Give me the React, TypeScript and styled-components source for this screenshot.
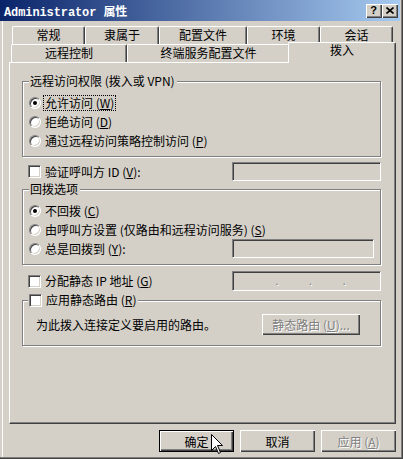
import React from 'react';
import styled, { createGlobalStyle, css } from 'styled-components';

const FACE = '#D4D0C8';
const SHADOW = '#808080';
const DARK = '#404040';

const Global = createGlobalStyle`
  html, body { margin: 0; padding: 0; background: ${FACE}; }
  body { font-family: "Noto Sans CJK SC", sans-serif; font-size: 12px; }
`;

const Window = styled.div`
  position: relative;
  width: 403px;
  height: 459px;
  box-sizing: border-box;
  background: ${FACE};
  border-right: 1px solid ${DARK};
  border-bottom: 1px solid ${DARK};
  box-shadow: inset -1px -1px 0 ${SHADOW}, inset 2px 0 0 ${FACE}, inset 3px 0 0 #fff;
  padding: 0 2px 0 0;
  display: flex;
  flex-direction: column;
  overflow: hidden;
  font-family: "Noto Sans CJK SC", sans-serif;
  font-size: 12px;
  color: #000;
`;

const TitleBar = styled.div`
  height: 21px;
  flex: none;
  display: flex;
  align-items: center;
  padding: 0 2px 0 4px;
  background: linear-gradient(to right, #0a246a, #a6caf0);
`;

const Title = styled.span`
  flex: 1;
  font-family: "Liberation Mono", "Noto Sans CJK SC", monospace;
  font-weight: bold;
  font-size: 12px;
  color: #fff;
  white-space: pre;
  letter-spacing: -0.1px;
`;

const CaptionButton = styled.div`
  width: 16px;
  height: 14px;
  box-sizing: border-box;
  background: ${FACE};
  box-shadow: inset 1px 1px 0 #fff, inset -1px -1px 0 ${DARK}, inset -2px -2px 0 ${SHADOW};
  display: flex;
  align-items: center;
  justify-content: center;
  font-family: "Liberation Sans", sans-serif;
  font-weight: bold;
  font-size: 11px;
  line-height: 1;
  color: #000;
  padding: 0 1px 1px 0;
`;

const Body = styled.div`
  flex: 1;
  display: flex;
  flex-direction: column;
  padding: 5px 4px 0 9px;
`;

const TabRow = styled.div<{ $indent: number }>`
  height: 18px;
  display: flex;
  align-items: flex-start;
  padding-left: ${p => p.$indent}px;
`;

const Tab = styled.div<{ $w: number; $active?: boolean }>`
  width: ${p => p.$w}px;
  height: 18px;
  box-sizing: border-box;
  flex: none;
  display: flex;
  align-items: center;
  justify-content: center;
  background: ${FACE};
  border-top: 1px solid #fff;
  border-left: 1px solid #fff;
  border-right: 1px solid ${DARK};
  border-top-left-radius: 2px;
  border-top-right-radius: 2px;
  box-shadow: inset -1px 0 0 ${SHADOW};
  padding-bottom: 2px;
  line-height: 14px;
  white-space: nowrap;
  ${p =>
    p.$active &&
    css`
      position: relative;
      z-index: 1;
      width: ${p.$w + 4}px;
      height: 21px;
      margin: -2px -2px 0;
      padding: 0 0 6px;
    `}
`;

const Panel = styled.div`
  height: 362px;
  box-sizing: border-box;
  border-top: 1px solid #fff;
  border-left: 1px solid #fff;
  border-right: 1px solid ${DARK};
  border-bottom: 1px solid ${DARK};
  box-shadow: inset -1px -1px 0 ${SHADOW};
  padding: 11px 14px 0 12px;
  display: flex;
  flex-direction: column;
`;

const Group = styled.fieldset<{ $pt: number; $pb: number; $mt?: number }>`
  margin: ${p => p.$mt ?? 0}px 0 0;
  min-width: 0;
  border: 1px solid ${SHADOW};
  box-shadow: inset 1px 1px 0 #fff, 1px 1px 0 #fff;
  padding: ${p => `${p.$pt}px 6px ${p.$pb}px 6px`};
`;

const Legend = styled.legend<{ $ml?: number }>`
  height: 14px;
  line-height: 14px;
  padding: 0 2px 0 1px;
  margin-left: ${p => p.$ml ?? 0}px;
  background: ${FACE};
  display: flex;
  align-items: center;
  gap: 4px;
  white-space: pre;
`;

const OptionRow = styled.div<{ $h?: number; $mt?: number; $pl?: number }>`
  height: ${p => p.$h ?? 19}px;
  margin-top: ${p => p.$mt ?? 0}px;
  padding-left: ${p => p.$pl ?? 0}px;
  display: flex;
  align-items: center;
  gap: 4px;
  white-space: pre;
`;

const Radio = styled.span<{ $checked?: boolean }>`
  width: 12px;
  height: 12px;
  box-sizing: border-box;
  flex: none;
  border-radius: 50%;
  border: 1px solid;
  border-color: ${SHADOW} #fff #fff ${SHADOW};
  box-shadow: inset 1px 1px 0 ${DARK}, inset -1px -1px 0 ${FACE};
  background: #fff;
  display: flex;
  align-items: center;
  justify-content: center;
  &::after {
    content: '';
    width: 4px;
    height: 4px;
    border-radius: 50%;
    background: ${p => (p.$checked ? '#000' : 'transparent')};
  }
`;

const Check = styled.span`
  width: 13px;
  height: 13px;
  box-sizing: border-box;
  flex: none;
  border: 1px solid;
  border-color: ${SHADOW} #fff #fff ${SHADOW};
  box-shadow: inset 1px 1px 0 ${DARK}, inset -1px -1px 0 ${FACE};
  background: #fff;
`;

const Label = styled.span<{ $focus?: boolean }>`
  line-height: 14px;
  ${p =>
    p.$focus &&
    css`
      outline: 1px dotted #000;
      outline-offset: 0;
      padding: 0 1px;
      margin-left: -1px;
    `}
`;

const Edit = styled.div<{ $w: number; $h?: number }>`
  width: ${p => p.$w}px;
  height: ${p => p.$h ?? 19}px;
  box-sizing: border-box;
  flex: none;
  margin-left: auto;
  border: 1px solid;
  border-color: ${SHADOW} #fff #fff ${SHADOW};
  box-shadow: inset 1px 1px 0 ${DARK}, inset -1px -1px 0 ${FACE};
  background: ${FACE};
  display: flex;
  align-items: center;
  justify-content: space-evenly;
  padding: 0 4px 0 12px;
`;

const Dot = styled.span`
  color: ${SHADOW};
  text-shadow: 1px 1px 0 #fff;
  line-height: 12px;
  font-family: "Liberation Sans", sans-serif;
  font-size: 12px;
`;

const PushButton = styled.button<{ $w: number; $h: number; $default?: boolean; $disabled?: boolean }>`
  width: ${p => p.$w}px;
  height: ${p => p.$h}px;
  box-sizing: border-box;
  flex: none;
  margin: 0;
  padding: 0;
  border: ${p => (p.$default ? '1px solid #000' : 'none')};
  background: ${FACE};
  box-shadow: inset 1px 1px 0 #fff, inset -1px -1px 0 ${DARK}, inset -2px -2px 0 ${SHADOW};
  font-family: "Noto Sans CJK SC", sans-serif;
  font-size: 12px;
  color: ${p => (p.$disabled ? SHADOW : '#000')};
  text-shadow: ${p => (p.$disabled ? '1px 1px 0 #fff' : 'none')};
  display: flex;
  align-items: center;
  justify-content: center;
  white-space: pre;
`;

const RouteButton = styled(PushButton)`
  margin-left: auto;
  margin-right: 14px;
`;

const Text = styled.span`
  line-height: 14px;
  white-space: pre;
`;

const ButtonRow = styled.div`
  display: flex;
  justify-content: flex-end;
  gap: 6px;
  margin-top: 6px;
`;

const Cursor = styled.svg`
  position: absolute;
  left: 211px;
  top: 434px;
  z-index: 5;
`;

const M = ({ k }: { k: string }) => (
  <>
    (<u>{k}</u>)
  </>
);

export default function App() {
  return (
    <>
      <Global />
      <Window>
        <TitleBar>
          <Title>Administrator 属性</Title>
          <CaptionButton>?</CaptionButton>
          <CaptionButton>
            <svg width="8" height="7" viewBox="0 0 8 7">
              <path d="M0.5 0.5 L7.5 6.5 M7.5 0.5 L0.5 6.5" stroke="#000" strokeWidth="1.6" />
            </svg>
          </CaptionButton>
        </TitleBar>
        <Body>
          <TabRow $indent={3}>
            <Tab $w={73}>常规</Tab>
            <Tab $w={74}>隶属于</Tab>
            <Tab $w={88}>配置文件</Tab>
            <Tab $w={73}>环境</Tab>
            <Tab $w={73}>会话</Tab>
          </TabRow>
          <TabRow $indent={2}>
            <Tab $w={116}>远程控制</Tab>
            <Tab $w={163}>终端服务配置文件</Tab>
            <Tab $w={104} $active>
              拨入
            </Tab>
          </TabRow>
          <Panel>
            <Group $pt={5} $pb={6}>
              <Legend>远程访问权限 (拨入或 VPN)</Legend>
              <OptionRow>
                <Radio $checked />
                <Label $focus>
                  允许访问 <M k="W" />
                </Label>
              </OptionRow>
              <OptionRow>
                <Radio />
                <Label>
                  拒绝访问 <M k="D" />
                </Label>
              </OptionRow>
              <OptionRow>
                <Radio />
                <Label>
                  通过远程访问策略控制访问 <M k="P" />
                </Label>
              </OptionRow>
            </Group>

            <OptionRow $mt={5} $pl={6}>
              <Check />
              <Label>
                验证呼叫方 ID <M k="V" />:
              </Label>
              <Edit $w={149} />
            </OptionRow>

            <Group $pt={5} $pb={6} $mt={1}>
              <Legend>回拨选项</Legend>
              <OptionRow>
                <Radio $checked />
                <Label>
                  不回拨 <M k="C" />
                </Label>
              </OptionRow>
              <OptionRow>
                <Radio />
                <Label>
                  由呼叫方设置 (仅路由和远程访问服务) <M k="S" />
                </Label>
              </OptionRow>
              <OptionRow>
                <Radio />
                <Label>
                  总是回拨到 <M k="Y" />:
                </Label>
                <Edit $w={142} />
              </OptionRow>
            </Group>

            <OptionRow $mt={6} $h={20} $pl={6}>
              <Check />
              <Label>
                分配静态 IP 地址 <M k="G" />
              </Label>
              <Edit $w={149} $h={20}>
                <Dot>.</Dot>
                <Dot>.</Dot>
                <Dot>.</Dot>
              </Edit>
            </OptionRow>

            <Group $pt={7} $pb={10} $mt={2}>
              <Legend $ml={-1}>
                <Check />
                <Label>
                  应用静态路由 <M k="R" />
                </Label>
              </Legend>
              <OptionRow $h={21} $pl={7}>
                <Text>为此拨入连接定义要启用的路由。</Text>
                <RouteButton $w={98} $h={21} $disabled>
                  静态路由 <M k="U" />...
                </RouteButton>
              </OptionRow>
            </Group>
          </Panel>
          <ButtonRow>
            <PushButton $w={75} $h={22} $default>
              确定
            </PushButton>
            <PushButton $w={75} $h={22}>
              取消
            </PushButton>
            <PushButton $w={75} $h={22} $disabled>
              应用 <M k="A" />
            </PushButton>
          </ButtonRow>
        </Body>
        <Cursor width="13" height="21" viewBox="0 0 13 21">
          <path
            d="M0.5 0.5 L0.5 16.5 L4.5 12.5 L7.5 19.5 L9.5 18.5 L6.5 11.5 L11.5 11.5 Z"
            fill="#fff"
            stroke="#000"
            strokeWidth="1"
          />
        </Cursor>
      </Window>
    </>
  );
}
